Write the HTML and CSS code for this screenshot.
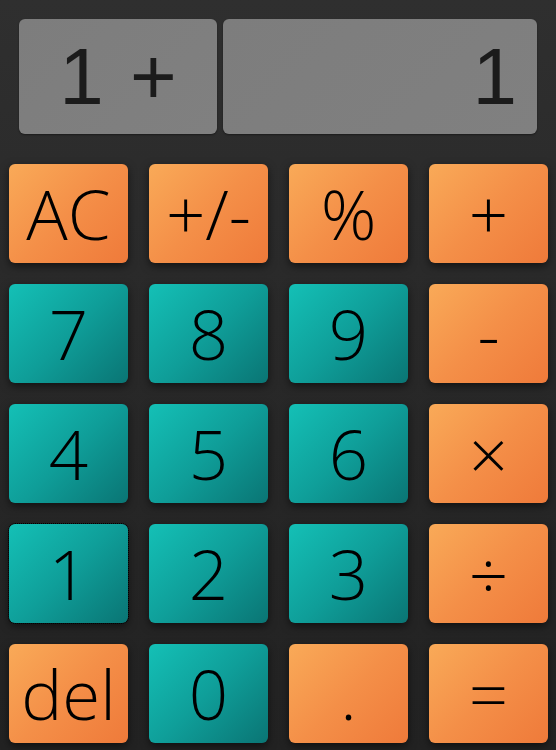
FILE: index.html
```html
<!DOCTYPE html>
<html>
<head>
<meta charset="utf-8">
<link rel="stylesheet" href="styles.css">
</head>
<body>
<div class="calc">
  <div class="display">
    <div class="screen expr">1 +</div>
    <div class="screen result">1</div>
  </div>
  <div class="keypad">
    <button class="key op">AC</button>
    <button class="key op">+/-</button>
    <button class="key op">%</button>
    <button class="key op">+</button>
    <button class="key num">7</button>
    <button class="key num">8</button>
    <button class="key num">9</button>
    <button class="key op">-</button>
    <button class="key num">4</button>
    <button class="key num">5</button>
    <button class="key num">6</button>
    <button class="key op">×</button>
    <button class="key num focus">1</button>
    <button class="key num">2</button>
    <button class="key num">3</button>
    <button class="key op">÷</button>
    <button class="key op">del</button>
    <button class="key num">0</button>
    <button class="key op">.</button>
    <button class="key op">=</button>
  </div>
</div>
</body>
</html>
```
FILE: styles.css
```css
html, body {
  margin: 0;
  height: 100%;
}
body {
  background: linear-gradient(180deg, #2f2f2f 0%, #282828 50%, #222222 100%);
  overflow: hidden;
}
.calc {
  width: 556px;
  height: 750px;
}
.display {
  display: flex;
  gap: 6px;
  padding: 19px 19px 0;
}
.screen {
  height: 115px;
  border-radius: 6px;
  background: linear-gradient(135deg, #7d7d7d, #808080);
  color: #1b1b1b;
  font-family: "Liberation Sans", Arial, sans-serif;
  font-size: 80px;
  display: flex;
  align-items: center;
  box-shadow: 0 1px 2px rgba(0,0,0,0.4);
}
.expr {
  width: 198px;
  justify-content: center;
  word-spacing: 4px;
}
.result {
  flex: 1;
  justify-content: flex-end;
  padding-right: 20px;
}
.keypad {
  display: grid;
  grid-template-columns: repeat(4, 120px);
  grid-auto-rows: 100px;
  gap: 20px;
  padding: 0 8px 0 9px;
  margin-top: 30px;
}
.key {
  border: none;
  border-radius: 6px;
  font-family: "Open Sans", "Segoe UI", sans-serif;
  font-weight: 300;
  font-size: 69px;
  line-height: 1;
  color: #000;
  padding: 0;
  display: flex;
  align-items: center;
  justify-content: center;
  box-shadow: 0 3px 8px rgba(0,0,0,0.55);
  width: 119px;
  height: 99px;
}
.op {
  background: linear-gradient(135deg, #f9aa58 0%, #f48f48 50%, #ef7a3a 100%);
}
.num {
  background: linear-gradient(135deg, #14c0b6 0%, #0f9e99 50%, #0a7574 100%);
}
.focus {
  outline: 1px dotted #000;
  outline-offset: 0;
}
```
